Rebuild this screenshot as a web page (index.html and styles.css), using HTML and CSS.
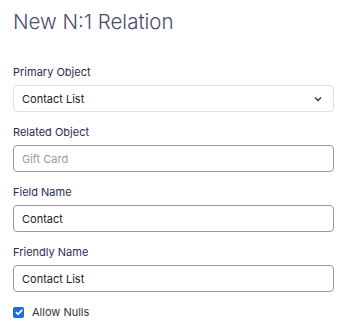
FILE: index.html
```html
<!doctype html>
<html lang="en">
<head>
    <meta charset="utf-8">
    <title>New N:1 Relation</title>
    <link rel="stylesheet" href="styles.css">
</head>
<body>
<div class="content">
    <h1 class="title">New N:1 Relation</h1>

    <div class="field">
        <label class="fieldLabel">Primary Object</label>
        <div class="selectBox">
            <span>Contact List</span>
            <svg class="caret" width="8" height="6" viewBox="0 0 8 6"><path d="M1 1.5 L4 4.5 L7 1.5" fill="none" stroke="#333" stroke-width="1.4"/></svg>
        </div>
    </div>

    <div class="field">
        <label class="fieldLabel">Related Object</label>
        <input class="textInput" type="text" placeholder="Gift Card">
    </div>

    <div class="field">
        <label class="fieldLabel">Field Name</label>
        <input class="textInput" type="text" value="Contact">
    </div>

    <div class="field">
        <label class="fieldLabel">Friendly Name</label>
        <input class="textInput" type="text" value="Contact List">
    </div>

    <label class="checkRow">
        <span class="checkBox">
            <svg width="10" height="10" viewBox="0 0 10 10"><path d="M2 5.2 L4.1 7.3 L8.2 2.8" fill="none" stroke="#fff" stroke-width="1.8"/></svg>
        </span>
        Allow Nulls
    </label>
</div>
</body>
</html>
```

FILE: styles.css
```css
* {
    margin: 0;
    padding: 0;
    box-sizing: border-box;
}

html, body {
    background: #fff;
    font-family: Inter, "Liberation Sans", sans-serif;
    font-size: 11px;
    color: #222;
}

.content {
    padding: 9px 8px 0 13px;
}

.title {
    font-size: 20.5px;
    font-weight: 300;
    line-height: 26px;
    color: #4b4b6e;
    margin-bottom: 30px;
}

.field {
    margin-bottom: 13px;
}

.fieldLabel {
    display: block;
    font-size: 11px;
    line-height: 14px;
    color: #2b2b52;
    margin-bottom: 6px;
}

.selectBox, .textInput {
    display: flex;
    align-items: center;
    width: 100%;
    height: 27px;
    border: 1px solid #cfcfcf;
    border-radius: 4px;
    padding: 0 8px;
    font-family: Inter, "Liberation Sans", sans-serif;
    font-size: 11px;
    color: #222;
    background: #fff;
    outline: none;
}

.selectBox {
    justify-content: space-between;
    border-color: #dedede;
}

.selectBox .caret {
    margin-right: 3px;
}

.textInput {
    border-color: #9a9a9a;
}

.textInput::placeholder {
    color: #9a9a9a;
}

.checkRow {
    display: flex;
    align-items: center;
    gap: 8px;
    font-size: 11px;
    color: #333;
}

.checkBox {
    display: flex;
    align-items: center;
    justify-content: center;
    width: 11px;
    height: 11px;
    border-radius: 2px;
    background: #1a6fd6;
}
```
